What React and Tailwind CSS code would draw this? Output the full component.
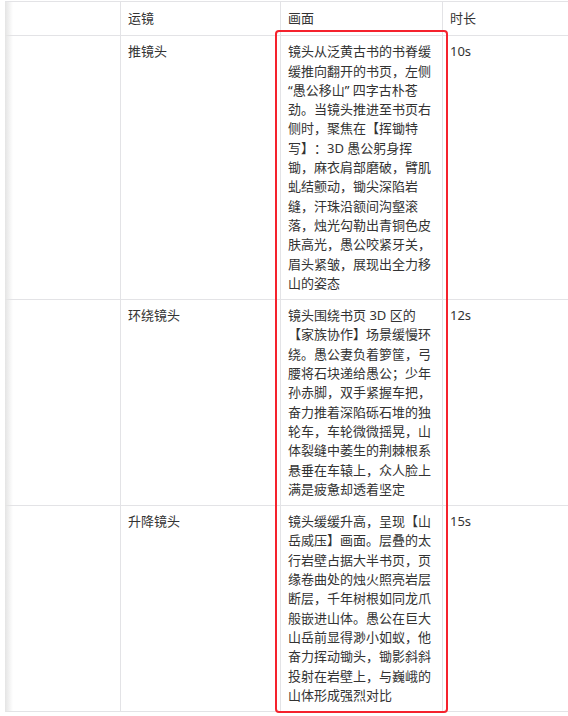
import React from "react";

const rows = [
  {
    move: "推镜头",
    scene:
      "镜头从泛黄古书的书脊缓缓推向翻开的书页，左侧 “愚公移山” 四字古朴苍劲。当镜头推进至书页右侧时，聚焦在【挥锄特写】：3D 愚公躬身挥锄，麻衣肩部磨破，臂肌虬结颤动，锄尖深陷岩缝，汗珠沿额间沟壑滚落，烛光勾勒出青铜色皮肤高光，愚公咬紧牙关，眉头紧皱，展现出全力移山的姿态",
    time: "10s",
  },
  {
    move: "环绕镜头",
    scene:
      "镜头围绕书页 3D 区的【家族协作】场景缓慢环绕。愚公妻负着箩筐，弓腰将石块递给愚公；少年孙赤脚，双手紧握车把，奋力推着深陷砾石堆的独轮车，车轮微微摇晃，山体裂缝中萎生的荆棘根系悬垂在车辕上，众人脸上满是疲惫却透着坚定",
    time: "12s",
  },
  {
    move: "升降镜头",
    scene:
      "镜头缓缓升高，呈现【山岳威压】画面。层叠的太行岩壁占据大半书页，页缘卷曲处的烛火照亮岩层断层，千年树根如同龙爪般嵌进山体。愚公在巨大山岳前显得渺小如蚁，他奋力挥动锄头，锄影斜斜投射在岩壁上，与巍峨的山体形成强烈对比",
    time: "15s",
  },
];

const Row = ({ a, b, c, head }) => (
  <div className="flex border-b border-[#e3e3e6]">
    <div className="w-[116px] shrink-0 border-r border-[#e3e3e6]" />
    <div
      className={`w-[160px] shrink-0 border-r border-[#e3e3e6] px-[7px] ${
        head ? "py-[7px]" : "py-[6px]"
      }`}
    >
      {a}
    </div>
    <div
      className={`w-[162px] shrink-0 border-r border-[#e3e3e6] px-[7px] ${
        head ? "py-[7px]" : "py-[6px]"
      }`}
    >
      {b}
    </div>
    <div
      className={`w-[140px] shrink-0 border-r border-[#e3e3e6] px-[7px] ${
        head ? "py-[7px]" : "py-[6px]"
      }`}
    >
      {c}
    </div>
  </div>
);

export default function App() {
  return (
    <div
      className="relative w-[568px] h-[716px] overflow-hidden bg-white pt-[1px] pl-[5px] text-[13px] leading-[19.3px] text-[#333] [text-spacing-trim:space-all]"
      style={{ fontFamily: '"Noto Sans", "Noto Sans CJK SC", sans-serif' }}
    >
      <div className="relative border-t border-[#e3e3e6]">
        <Row head a="运镜" b="画面" c="时长" />
        {rows.map((r) => (
          <Row key={r.time} a={r.move} b={r.scene} c={r.time} />
        ))}
        {/* scroll shadow on the left edge */}
        <div className="pointer-events-none absolute left-0 top-0 bottom-0 w-[8px] bg-gradient-to-r from-[#e4e4e4] to-transparent" />
      </div>

      {/* red highlight around the 画面 column */}
      <div className="pointer-events-none absolute left-[275px] top-[30px] w-[173px] h-[683px] rounded-[4px] border-2 border-[#f5222d]" />
    </div>
  );
}
